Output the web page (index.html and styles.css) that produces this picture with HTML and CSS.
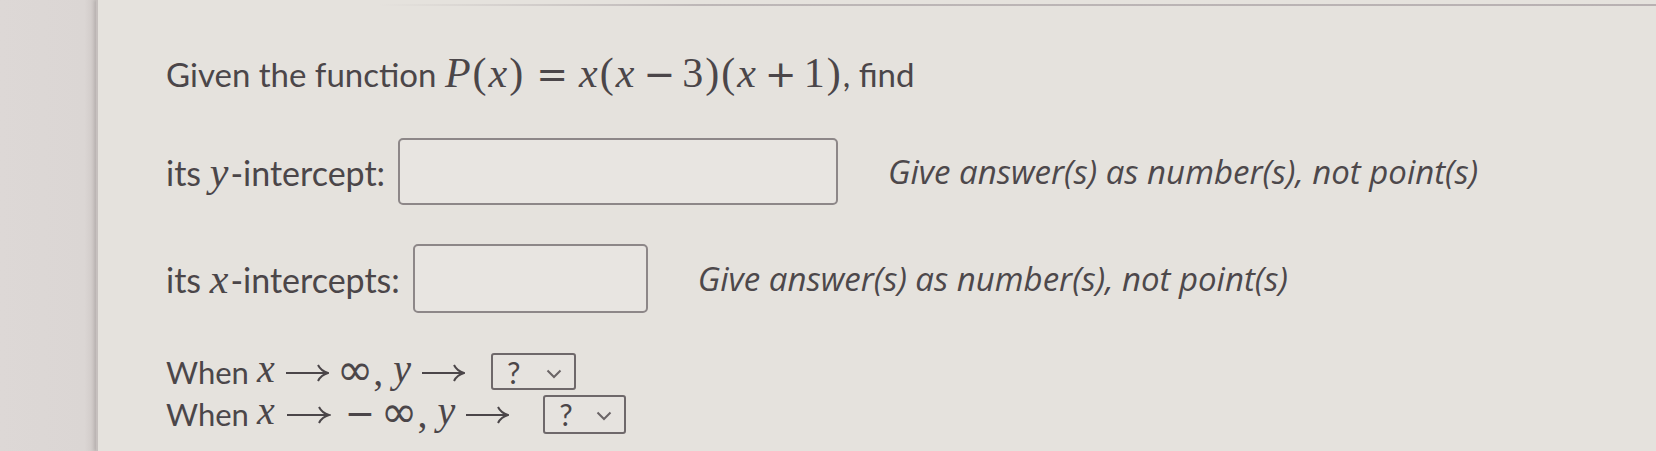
FILE: index.html
```html
<!DOCTYPE html>
<html>
<head>
<meta charset="utf-8">
<link rel="stylesheet" href="styles.css">
</head>
<body>
<div class="side"></div>
<div class="panel">
  <div class="topline"></div>
  <div class="content">
    <div class="title">Given the function <span class="m"><i>P</i>(<i>x</i>)<span class="op rel">=</span><i>x</i>(<i>x</i><span class="op bin">−</span>3)(<i>x</i><span class="op bin">+</span>1)</span>, find</div>
    <div class="row r1">
      <span class="lbl">its <span class="m"><i>y</i></span>-intercept:</span>
      <span class="box b1"></span>
      <span class="hint h1">Give answer(s) as number(s), not point(s)</span>
    </div>
    <div class="row r2">
      <span class="lbl">its <span class="m"><i>x</i></span>-intercepts:</span>
      <span class="box b2"></span>
      <span class="hint h2">Give answer(s) as number(s), not point(s)</span>
    </div>
    <div class="lim l1">
      <span class="when">When</span>
      <span class="mv">x</span>
      <svg class="arr" viewBox="0 0 44 22" width="44" height="22"><path d="M1 12 H42" stroke="#4b4649" stroke-width="2" fill="none"/><path d="M33 4 Q36 10 43 12 Q36 14 33 20" stroke="#4b4649" stroke-width="2" fill="none"/></svg>
      <span class="inf">∞</span><span class="comma">,</span>
      <span class="mv">y</span>
      <svg class="arr" viewBox="0 0 44 22" width="44" height="22"><path d="M1 12 H42" stroke="#4b4649" stroke-width="2" fill="none"/><path d="M33 4 Q36 10 43 12 Q36 14 33 20" stroke="#4b4649" stroke-width="2" fill="none"/></svg>
      <span class="sel"><span class="q">?</span><svg class="chev" viewBox="0 0 16 10" width="16" height="10"><path d="M1.5 1.5 L8 8 L14.5 1.5" fill="none" stroke="#6a6466" stroke-width="2"/></svg></span>
    </div>
    <div class="lim l2">
      <span class="when">When</span>
      <span class="mv">x</span>
      <svg class="arr" viewBox="0 0 44 22" width="46" height="22"><path d="M1 12 H42" stroke="#4b4649" stroke-width="2" fill="none"/><path d="M33 4 Q36 10 43 12 Q36 14 33 20" stroke="#4b4649" stroke-width="2" fill="none"/></svg>
      <span class="neg">−</span>
      <span class="inf">∞</span><span class="comma">,</span>
      <span class="mv">y</span>
      <svg class="arr" viewBox="0 0 44 22" width="44" height="22"><path d="M1 12 H42" stroke="#4b4649" stroke-width="2" fill="none"/><path d="M33 4 Q36 10 43 12 Q36 14 33 20" stroke="#4b4649" stroke-width="2" fill="none"/></svg>
      <span class="sel"><span class="q">?</span><svg class="chev" viewBox="0 0 16 10" width="16" height="10"><path d="M1.5 1.5 L8 8 L14.5 1.5" fill="none" stroke="#6a6466" stroke-width="2"/></svg></span>
    </div>
  </div>
</div>
</body>
</html>
```
FILE: styles.css
```css
html, body {
  margin: 0;
  padding: 0;
  height: 100%;
}
body {
  display: flex;
  width: 1656px;
  height: 451px;
  overflow: hidden;
  background: #dcd7d4;
  font-family: Lato, "Open Sans", sans-serif;
  color: #4b4649;
}
.side {
  width: 96px;
  flex: none;
  background: linear-gradient(90deg, #ddd8d6 0%, #dbd6d4 88%, #cdc7c5 100%);
}
.panel {
  flex: 1;
  position: relative;
  background: #e5e2dd;
  border-left: 2px solid #c6c0be;
  box-shadow: -2px 0 3px rgba(120,110,110,0.25);
}
.topline {
  position: absolute;
  top: 4px;
  left: 280px;
  right: 0;
  height: 2px;
  background: linear-gradient(90deg, rgba(190,183,183,0) 0%, #bdb7b7 25%, #b8b1b2 100%);
}
.content {
  padding: 50px 0 0 68px;
  display: flex;
  flex-direction: column;
}
.title {
  font-size: 33px;
  line-height: 46px;
  height: 46px;
  white-space: nowrap;
}
.m {
  font-family: "Liberation Serif", "DejaVu Serif", serif;
  font-size: 42px;
  letter-spacing: 2px;
}
.m i { font-style: italic; }
.op {
  font-family: "DejaVu Sans", sans-serif;
  font-size: 38px;
  letter-spacing: 0;
}
.rel { margin: 0 11px; }
.bin { margin: 0 7px; }
.row {
  display: flex;
  align-items: center;
  font-size: 33px;
}
.r1 { margin-top: 42px; height: 67px; }
.r2 { margin-top: 39px; height: 69px; }
.lbl { white-space: nowrap; font-size: 34px; }
.box {
  display: block;
  border: 2px solid #8d8788;
  border-radius: 5px;
  background: #e8e5e1;
  box-sizing: border-box;
  height: 67px;
  margin-left: 13px;
}
.b1 { width: 440px; }
.b2 { width: 235px; height: 69px; }
.hint {
  font-family: "Open Sans", Lato, sans-serif;
  font-style: italic;
  font-size: 33px;
  margin-left: 50px;
  color: #4d484b;
}
.lim {
  display: flex;
  align-items: center;
  font-size: 31px;
  white-space: nowrap;
}
.l1 { margin-top: 40px; height: 37px; }
.l2 { margin-top: 4px; height: 40px; }
.when { margin-right: 8px; }
.mv {
  font-family: "Liberation Serif", serif;
  font-style: italic;
  font-size: 40px;
  line-height: 0.8;
  margin-top: -6px;
}
.arr { margin: 0 8px 0 10px; flex: none; }
.inf {
  font-family: "DejaVu Sans", sans-serif;
  font-size: 44px;
  line-height: 0.8;
  margin-top: -4px;
}
.comma {
  font-family: "Liberation Serif", serif;
  font-size: 40px;
  line-height: 0.8;
  margin-right: 10px;
}
.neg {
  font-family: "DejaVu Sans", sans-serif;
  font-size: 36px;
  line-height: 0.8;
  margin: 0 6px 0 6px;
}
.sel {
  display: flex;
  align-items: center;
  justify-content: space-between;
  box-sizing: border-box;
  width: 85px;
  height: 36px;
  margin-left: 18px;
  padding: 0 12px 0 14px;
  border: 2px solid #6e686a;
  border-radius: 3px;
  background: #e6e3df;
  font-size: 30px;
  flex: none;
}
.l1 .sel { height: 37px; }
.l2 .sel { height: 39px; width: 83px; margin-left: 26px; }
.q { line-height: 1; }
.chev { margin-top: 4px; }
```
